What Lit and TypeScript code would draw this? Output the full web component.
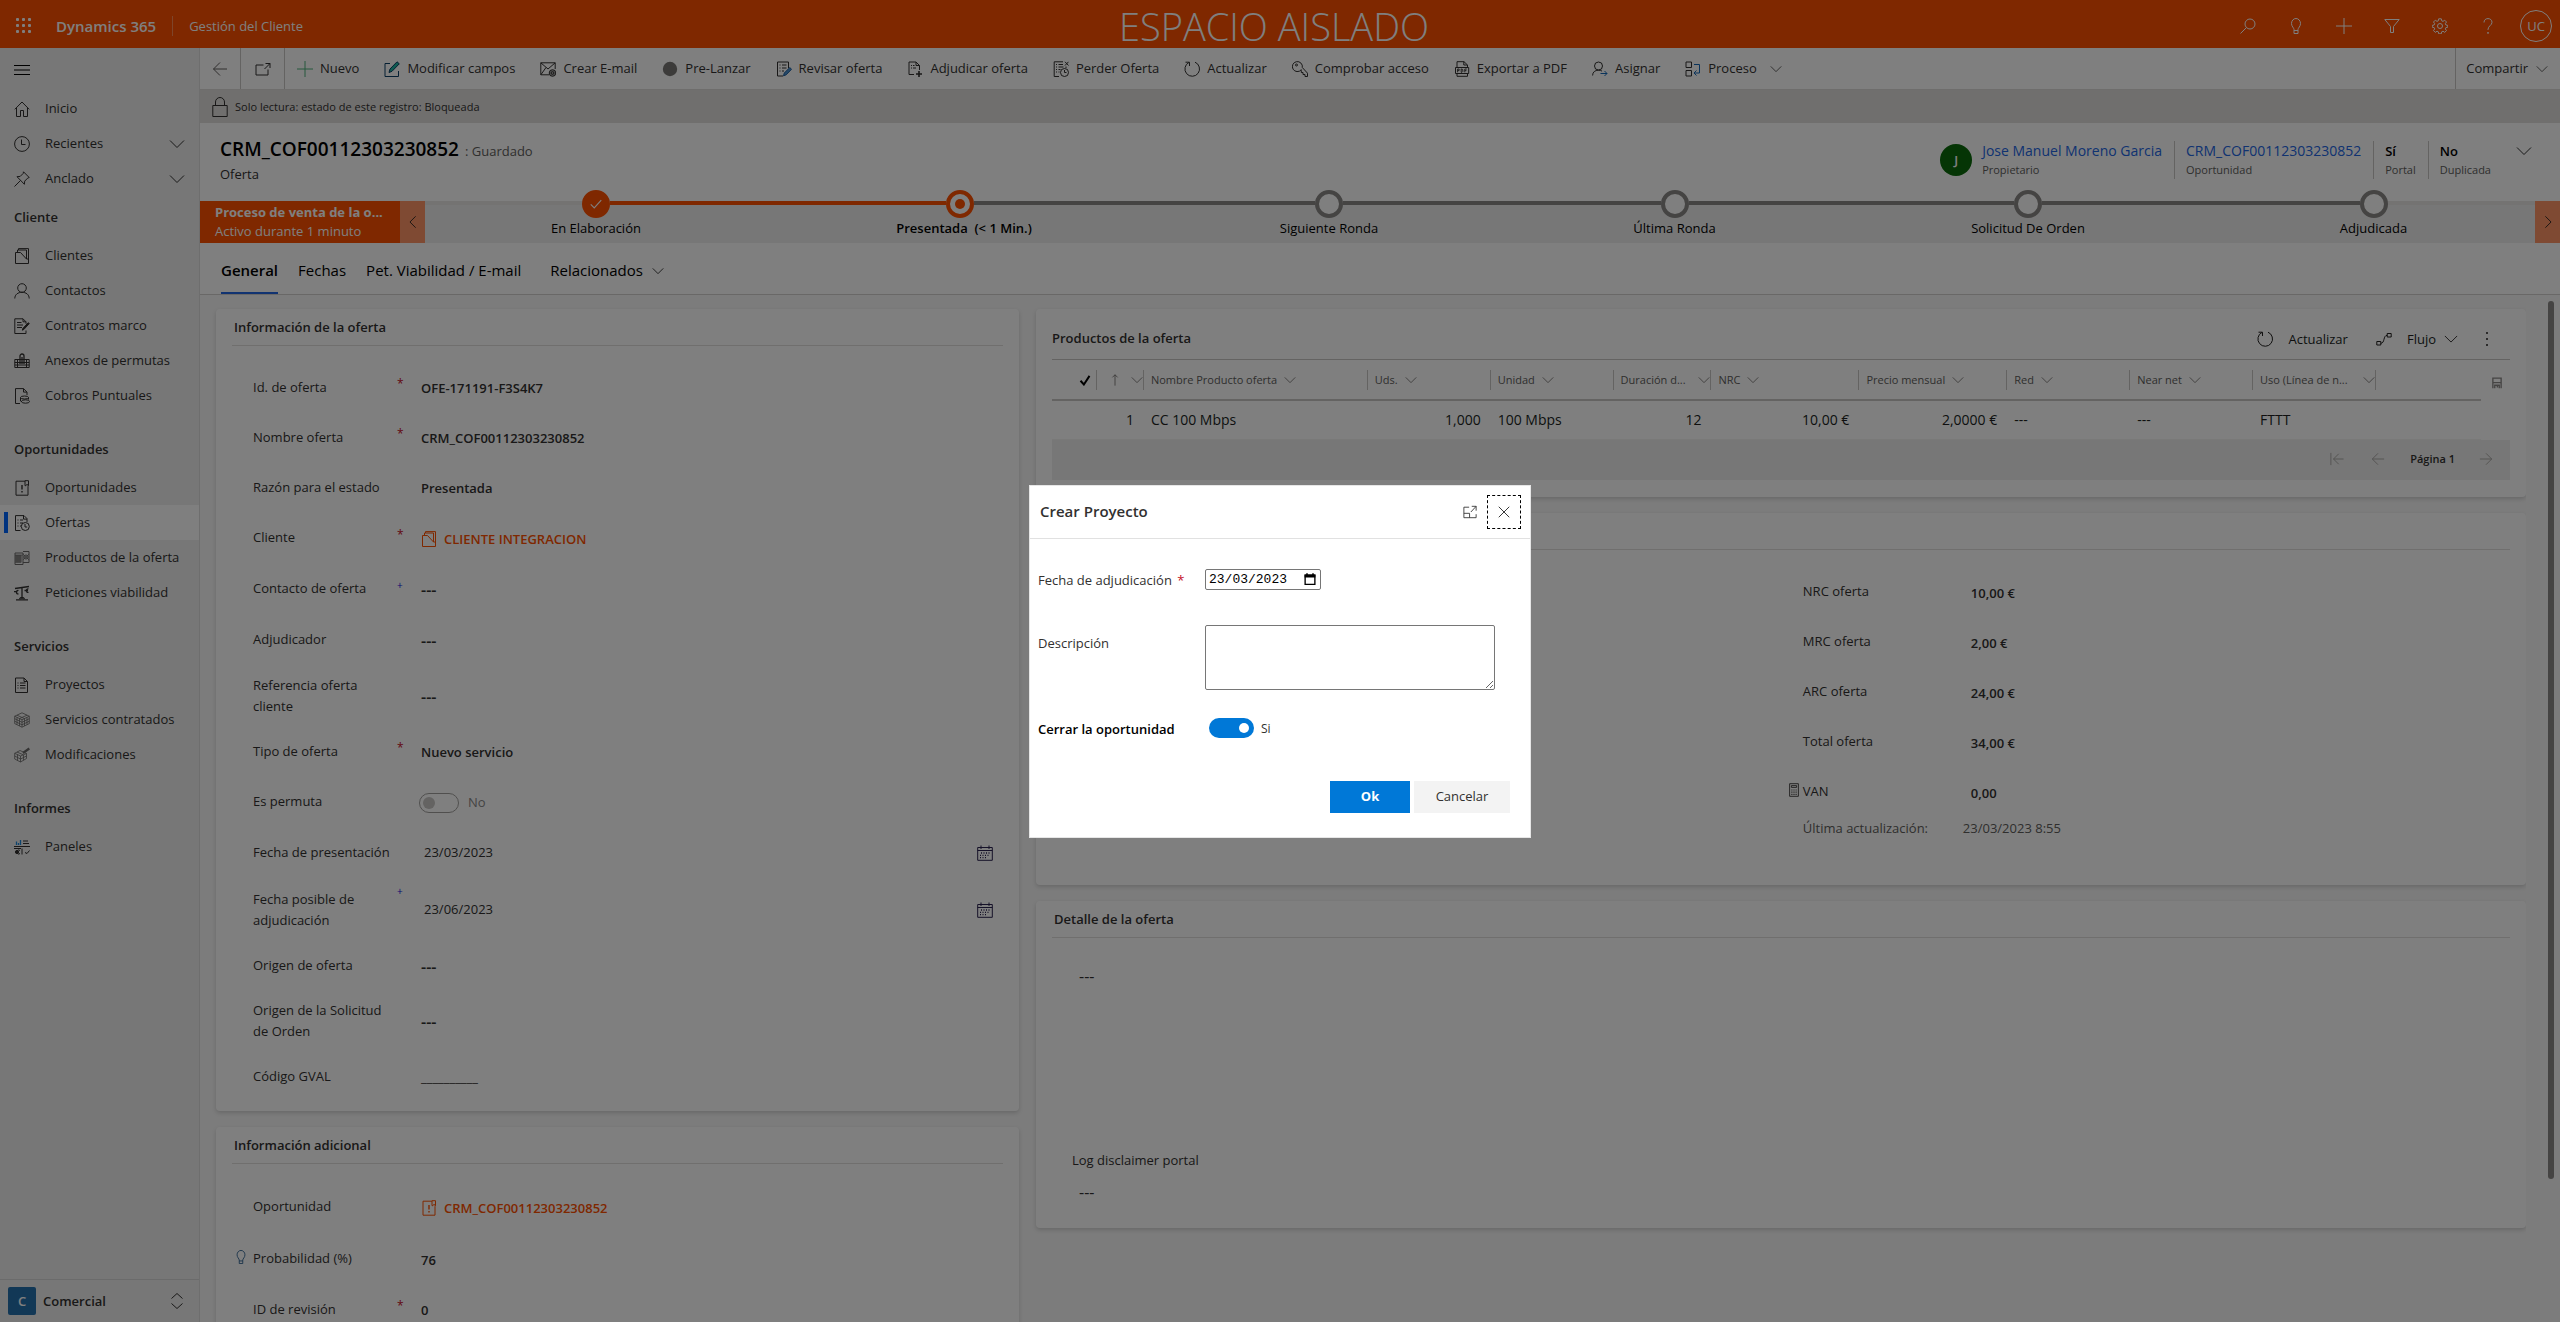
import { LitElement, html, svg, css, nothing, TemplateResult } from "lit";
import { customElement, state } from "lit/decorators.js";

/* 16x16 stroke icons, drawn in currentColor unless a colour is part of the glyph. */
const GLYPHS: Record<string, TemplateResult> = {
  waffle: svg`<g fill="currentColor" stroke="none">${[1, 7, 13].map((y) =>
    [1, 7, 13].map((x) => svg`<rect x=${x - 1} y=${y - 1} width="3" height="3" rx="1"/>`)
  )}</g>`,
  search: svg`<circle cx="10" cy="6" r="5"/><path d="M6.500 9.500.5 15.500"/>`,
  bulb: svg`<path d="M6 15.500h4v-4c0-1.500 2.500-3 2.500-6a4.500 5 0 0 0-9 0c0 3 2.500 4.500 2.500 6zM6 12.500h4"/>`,
  plus: svg`<path d="M8 0v16M0 8h16"/>`,
  filter: svg`<path d="M.8 1.500h14.400L9.500 8.500v6h-3v-6z"/>`,
  gear: svg`<circle cx="8" cy="8" r="2.500"/><path d="M6.700.8h2.600l.4 2 1.300.6 1.700-1.200 1.800 1.800-1.200 1.700.6 1.300 1.900.4v1.800l-1.900.4-.6 1.300 1.200 1.700-1.800 1.800-1.700-1.200-1.300.6-.4 2H6.700l-.4-2-1.300-.6-1.700 1.200-1.800-1.800 1.200-1.700-.6-1.300-1.900-.4V7.400l1.900-.4.6-1.300L1.500 4l1.800-1.800L5 3.400l1.300-.6z"/>`,
  help: svg`<path d="M4 4.500C4 2 5.700.6 8 .6s4 1.500 4 3.700c0 3-4 3.700-4 7.200v.5"/><path d="M8 14v1.800" stroke-width="1.400"/>`,
  menu: svg`<path d="M0 3.500h16M0 8h16M0 12.500h16" stroke-width="1.200"/>`,
  home: svg`<path d="M.8 8.300 8 1l7.200 7.300M2.500 7v8.500h4V9.500h3v6h4V7"/>`,
  clock: svg`<circle cx="8" cy="8" r="7.400"/><path d="M7.500 3.500v5h4"/>`,
  pin: svg`<path d="m9.500.8 5.700 5.700-1.500.6-3 3-.3 3.200L3 5.700l3.200-.3 3-3zM6.500 9.500.5 15.500"/>`,
  chev: svg`<path d="m1 4.500 7 7 7-7"/>`,
  left: svg`<path d="M11 1.500 4.500 8l6.500 6.500"/>`,
  right: svg`<path d="M5 1.500 11.500 8 5 14.500"/>`,
  updown: svg`<path d="m2.500 5.500 5.500-5 5.500 5M2.500 10.500l5.500 5 5.500-5"/>`,
  clientes: svg`<path d="M1.500 4.500h5l6 6.500h2v4.500h-13zM3.500 4.500v-2.500h9v9M4.500 2V.6h10V11"/>`,
  person: svg`<circle cx="8" cy="5" r="4.300"/><path d="M.8 15.500c0-4 3.200-6.200 7.200-6.200s7.200 2.200 7.200 6.200"/>`,
  contract: svg`<path d="M12 12.500v3H.8V.8H9l3 3v2M9 .8v3h3M3 4.500h4.500M3 7h6M3 9.500h5"/><path d="m15.300 5.500-5.500 6-1.500.7.500-1.700 5.300-5.700z" fill="currentColor"/>`,
  anexo: svg`<path d="M.8 14.500V6.500h14.400v8zM.8 9.500h14.400M.8 12h14.400M3.500 6.500v8M12.500 6.500v8"/><path d="M6 11V3a2 2 0 0 1 4 0v8M8 4v7" stroke-width="1.300"/>`,
  cobro: svg`<path d="M6 15.500H1.500V.6h8l3.500 3.500V7M9.500.6v3.500H13"/><ellipse cx="10.500" cy="9.500" rx="4" ry="1.500"/><ellipse cx="11.500" cy="13.500" rx="4" ry="1.700"/><path d="M6.500 9.500v3.500l1.500.8M14.500 9.500v2"/>`,
  oportunidad: svg`<path d="M11 1.200H2v14h12v-9M11 .7h3.500v5H14l-.9-1.500-1.200 1.500H11z"/><path d="M8 5v4.500M8 11v1.400" stroke-width="1.400"/>`,
  oferta: svg`<path d="M6.500 15.500H1.500V.6H10l3 3V7M9.500.6v3.500H13M3.500 5h1M3.500 8h1M3.500 11h1M6 5h3M6 8h3M6 11h1"/><circle cx="11.300" cy="11.500" r="4"/><path d="M11 9v3h2.200"/>`,
  productos: svg`<path d="M1 3h8v11.500H1zM9 1.500h6v11H9M3 5v7.500M5 5v7.500M7 5v7.500"/><path d="M2 5v8M4 5v8M6 5v8" stroke-width="1.200"/><circle cx="12" cy="7" r="2"/><path d="M1 5h8M9 4l6 6M15 4 9 10" opacity=".7"/>`,
  viabilidad: svg`<path d="M1 3.500 15 1.500M8 2v12M2 14.800h12M5.500 14c.5-1 1.500-1.500 2.500-1.500s2 .5 2.500 1.500M4.500 5.500C2 4.500 1.500 9.500 4.500 8.800M0 6.700h3.500M14.500 4C12 3 11.500 8 14.500 7.300M10.500 5.500h3.500" stroke-width="1.300"/>`,
  proyectos: svg`<path d="M1.500 1h8.500l3.500 3.500v11h-12zM10 1v3.500h3.500M3.500 6h1M3.500 8.500h1M3.500 11h1M6 6h5.500M6 8.500h5.500M6 11h5.500"/>`,
  cubo: svg`<path d="m8 .8 7.300 3.400v7.400L8 15.200.7 11.600V4.200zM.7 4.200 8 7.800l7.300-3.600M8 7.800v7.400M3 5.300v7.400M5.500 6.500v7.500M10.500 6.500v7.500M13 5.300v7.400M.7 6.700 8 10.300l7.300-3.600M.7 9.200 8 12.800l7.300-3.600M3 3.200 10.500 6.600M13 3.200 5.500 6.600" stroke-width=".8"/>`,
  modif: svg`<path d="m6 3.500 6.500 3v5L6.500 15 .7 12V6.300zM.7 6.300 6.500 9l6-2.500M6.500 9v6M3.500 7.500v6M.7 9l5.800 3 6-3M9.500 8v5.300M3 5l6 2.700" stroke-width=".8"/><path d="m9 6 6.300-4.500" stroke-width="2.200"/>`,
  paneles: svg`<path d="M0 7.500h16M0 9.500h7M8 9.500v6"/><path d="M2.500 6V2.500M4.500 6V4M6.500 6V1" stroke="#1a86d9" stroke-width="1.300"/><path d="M9 2h5M9 4.500h6M11 13.500l2 1 2.500-3M6 11.500a2 2 0 1 0 0 3"/><circle cx="3" cy="13" r="1.600" fill="currentColor"/>`,
  back: svg`<path d="M15 8H1.500M8 1.500 1.500 8 8 14.500"/>`,
  fwd: svg`<path d="M1 8h13.500M8 1.500 14.500 8 8 14.500"/>`,
  first: svg`<path d="M1 1v14M15.500 8H4M10 2 4 8l6 6"/>`,
  popout: svg`<path d="M8.500 4H1v10h12V8.500M10.500 2.500H15V7M15 2.500 9.500 8"/>`,
  lock: svg`<path d="M.8 8.500h14.400v11H.8zM3.500 8.500V5a4.500 4.500 0 0 1 9 0v3.500"/>`,
  campos: svg`<path d="M6 2.500H1v13h13.500V10" stroke="#0b3f66"/><path d="M5 11.500 6 8 13 .8l2.300 2L8 10.300z" fill="#1fb5a0" stroke="#0b3f66"/>`,
  mail: svg`<path d="M15.200 8V1.800H.8v12H9M.8 1.800 8 8l7.200-6.200M.8 13.800 6 6.500"/><circle cx="12.500" cy="12" r="3.300" fill="#aaa"/><circle cx="12.500" cy="12" r="1.400"/>`,
  dot: svg`<circle cx="8" cy="8" r="7.200" fill="#797775" stroke="none"/>`,
  revisar: svg`<path d="M7 15H1.500V1h11v6M3.500 4h1M3.500 7h1M3.500 10h1M6 4h4.500M6 7h4.500M6 10h2"/><path d="m7.500 14.800.8-2.800 5.500-5.500 1.700 1.800-5.300 5.500z" fill="#4a90d0" stroke="#1f5f9f"/>`,
  adjudicar: svg`<path d="M7 13.500H2V1h7l3.500 3.500V9M9 1v3.500h3.500M4 4.500h1M4 7h1M6 4.500h1.500M6 7h3"/><path d="M12 10v6M9 13h6" stroke-width="1.600"/>`,
  perder: svg`<path d="M6 15.500H1.200V.8H10M13 5.500V7M3 3.500h1M3 6h1M3 8.500h1M3 11h1M5.500 3.500H10M5.500 6h5M5.500 8.500h2M5.500 11h1M12 .8l3.500 3.700M15.500.8 12 4.500"/><circle cx="11.500" cy="11.500" r="4"/><path d="M11.500 9v2.500H13.500"/>`,
  refresh: svg`<path d="M11 1.200A7.300 7.300 0 1 1 5 1.400M5.500 5V1.200H1.500"/>`,
  key: svg`<path d="M9.300 8.700A5 5 0 1 1 10.300 6.500l5.200 5.700v3.300h-2.500v-2h-2v-2H9.300v-2z"/><circle cx="4.500" cy="4" r="1"/>`,
  pdf: svg`<path d="M3 6.500V.7h7L13.500 4v2.500M9.800.7V4h3.700M1.500 6.500h13.200v6H1.500zM3 12.500v2.800h10.500v-2.800"/><path d="M3.600 11.300V8h1.500v1.600H3.600M7.200 8v3.300h.8l.8-.8V8.700L8 8zM10.800 11.300V8h2M10.800 9.600h1.600" stroke-width=".9"/>`,
  asignar: svg`<circle cx="6.500" cy="5" r="4"/><path d="M.6 14.500c0-3.500 2.500-5.300 5.900-5.300 1.500 0 2.500.3 3.500.9"/><path d="M8.500 12.500H15M12.500 10l2.500 2.500-2.500 2.500" stroke="#1568b8"/>`,
  proceso: svg`<path d="M1 1h5.500v5.500H1zM1 9.500h5.500V15H1z"/><path d="M9 3.500h5.500v8.500H9M11.500 9.500 9 12l2.500 2.500" stroke="#1568b8"/>`,
  flujo: svg`<path d="M.8 10.500h4v3.500h-4zM11.200 2.500h4v3.500h-4zM4.800 12.300C9 12.300 7 4.300 11.200 4.300"/>`,
  dots: svg`<g fill="currentColor" stroke="none"><circle cx="8" cy="2" r="1"/><circle cx="8" cy="8" r="1"/><circle cx="8" cy="14" r="1"/></g>`,
  calendar: svg`<path d="M.7 2.500h14.600v12.800H.7zM.7 5.500h14.600M4 .5v3.500M12 .5v3.500"/><path d="M4 8h9M3 10.300h10M3 12.600h7" stroke-dasharray="1 1.500" stroke-width="1.300"/>`,
  calc: svg`<path d="M3 .8h10v14.400H3zM5 3h6v2H5z"/><path d="M5 8h6M5 10.500h6M5 13h6" stroke-dasharray="1.200 1.200" stroke-width="1.300"/>`,
  save: svg`<path d="M2.500 15V1.500h11V15M3 7.500h10M5 15v-4h6v4M8.500 12v2" stroke-width="1.800"/>`,
  up: svg`<path d="M8 15.500V1M4.500 4.500 8 1l3.500 3.500"/>`,
  checkbold: svg`<path d="m2 9 4.500 5L14 2.500" stroke-width="2.600"/>`,
  check: svg`<path d="m2 8.500 4 4 8-9" stroke-width="1.300"/>`,
  expand: svg`<path d="M7 2.500H1v12h14v-4M1 9.500h6.500v5M10 1.500h5v5M15 1.500 9 8"/>`,
  close: svg`<path d="m1 1 14 14M15 1 1 15" stroke-width="1.300"/>`,
  datepick: svg`<path d="M1.500 3h13v12.300h-13z" stroke-width="1.800"/><path d="M.8 2h14.400v4H.8zM3 .2h2v2H3zM11 .2h2v2h-2z" fill="currentColor" stroke="none"/>`,
};

const icon = (name: string, cls = "i16") => html`<svg
  class="ic ${cls}"
  viewBox=${name === "lock" ? "0 0 16 20" : "0 0 16 16"}
  aria-hidden="true"
>
  ${GLYPHS[name]}
</svg>`;

interface NavGroup {
  title?: string;
  items: { label: string; icon: string; chev?: boolean; active?: boolean; dim?: boolean }[];
}

const NAV: NavGroup[] = [
  {
    items: [
      { label: "Inicio", icon: "home" },
      { label: "Recientes", icon: "clock", chev: true },
      { label: "Anclado", icon: "pin", chev: true },
    ],
  },
  {
    title: "Cliente",
    items: [
      { label: "Clientes", icon: "clientes" },
      { label: "Contactos", icon: "person" },
      { label: "Contratos marco", icon: "contract" },
      { label: "Anexos de permutas", icon: "anexo" },
      { label: "Cobros Puntuales", icon: "cobro" },
    ],
  },
  {
    title: "Oportunidades",
    items: [
      { label: "Oportunidades", icon: "oportunidad" },
      { label: "Ofertas", icon: "oferta", active: true },
      { label: "Productos de la oferta", icon: "productos", dim: true },
      { label: "Peticiones viabilidad", icon: "viabilidad" },
    ],
  },
  {
    title: "Servicios",
    items: [
      { label: "Proyectos", icon: "proyectos" },
      { label: "Servicios contratados", icon: "cubo", dim: true },
      { label: "Modificaciones", icon: "modif", dim: true },
    ],
  },
  { title: "Informes", items: [{ label: "Paneles", icon: "paneles" }] },
];

const COMMANDS: [string, string][] = [
  ["plus", "Nuevo"],
  ["campos", "Modificar campos"],
  ["mail", "Crear E-mail"],
  ["dot", "Pre-Lanzar"],
  ["revisar", "Revisar oferta"],
  ["adjudicar", "Adjudicar oferta"],
  ["perder", "Perder Oferta"],
  ["refresh", "Actualizar"],
  ["key", "Comprobar acceso"],
  ["pdf", "Exportar a PDF"],
  ["asignar", "Asignar"],
  ["proceso", "Proceso"],
];

const STAGES = ["En Elaboración", "Presentada  (< 1 Min.)", "Siguiente Ronda", "Última Ronda", "Solicitud De Orden", "Adjudicada"];

interface Field {
  id: string;
  label: string;
  value?: string;
  mark?: "req" | "rec";
  kind?: "empty" | "lookup" | "date" | "toggle" | "mask";
  icon?: string;
  lead?: string;
  size?: string;
}

const OFFER: Field[] = [
  { id: "id", label: "Id. de oferta", value: "OFE-171191-F3S4K7", mark: "req" },
  { id: "nombre", label: "Nombre oferta", value: "CRM_COF00112303230852", mark: "req" },
  { id: "razon", label: "Razón para el estado", value: "Presentada" },
  { id: "cliente", label: "Cliente", value: "CLIENTE INTEGRACION", mark: "req", kind: "lookup", icon: "clientes", size: "md" },
  { id: "contacto", label: "Contacto de oferta", mark: "rec", kind: "empty", size: "md" },
  { id: "adjudicador", label: "Adjudicador", kind: "empty", size: "md" },
  { id: "ref", label: "Referencia oferta cliente", kind: "empty", size: "lg" },
  { id: "tipo", label: "Tipo de oferta", value: "Nuevo servicio", mark: "req" },
  { id: "permuta", label: "Es permuta", value: "No", kind: "toggle" },
  { id: "fpres", label: "Fecha de presentación", value: "23/03/2023", kind: "date", size: "date" },
  { id: "fadj", label: "Fecha posible de adjudicación", value: "23/06/2023", mark: "rec", kind: "date", size: "lg" },
  { id: "origen", label: "Origen de oferta", kind: "empty" },
  { id: "osol", label: "Origen de la Solicitud de Orden", kind: "empty", size: "lg" },
  { id: "gval", label: "Código GVAL", value: "__________", kind: "mask" },
];

const EXTRA: Field[] = [
  { id: "opp", label: "Oportunidad", value: "CRM_COF00112303230852", kind: "lookup", icon: "oportunidad", size: "date" },
  { id: "prob", label: "Probabilidad (%)", value: "76", lead: "bulb", size: "md" },
  { id: "rev", label: "ID de revisión", value: "0", mark: "req" },
];

const TOTALS: Field[] = [
  { id: "nrc", label: "NRC oferta", value: "10,00 €" },
  { id: "mrc", label: "MRC oferta", value: "2,00 €" },
  { id: "arc", label: "ARC oferta", value: "24,00 €" },
  { id: "total", label: "Total oferta", value: "34,00 €" },
  { id: "van", label: "VAN", value: "0,00", lead: "calc" },
];

@customElement("app-root")
export class AppRoot extends LitElement {
  @state() private closeOpportunity = true;

  static styles = css`
    :host {
      display: block;
      font-family: "Open Sans", "Noto Sans", sans-serif;
      font-size: 13px;
      line-height: 21px;
      color: #323130;
    }
    * { box-sizing: border-box; }
    button, input, textarea { font: inherit; color: inherit; }
    button { background: none; border: 0; padding: 0; }
    a { color: inherit; text-decoration: none; }
    h1, h2, h3, p { margin: 0; font-size: inherit; font-weight: 600; }
    .ic { flex: none; fill: none; stroke: currentColor; display: block; }
    .i12 { width: 12px; height: 12px; }
    .i14 { width: 14px; height: 14px; }
    .i16 { width: 16px; height: 16px; }
    .ilock { width: 16px; height: 20px; }

    .app { height: 100vh; display: grid; grid-template-rows: 48px minmax(0, 1fr); background: #fff; }
    .top { display: grid; grid-template-columns: 1fr auto 1fr; align-items: center; background: #ff5000; color: #fff; }
    .brand { display: flex; align-items: center; }
    .waffle { width: 48px; height: 48px; display: grid; place-items: center; margin-right: 8px; }
    .product { font-size: 15px; font-weight: 600; padding-right: 16px; border-right: 1px solid #ff8a55; line-height: 20px; }
    .appname { padding-left: 16px; }
    .env { font-size: 38px; font-weight: 300; line-height: 52px; height: 52px; align-self: start; margin-right: 12px; }
    .tools { display: flex; justify-content: flex-end; }
    .tools button { width: 48px; height: 48px; display: grid; place-items: center; }
    .uc { width: 32px; height: 32px; border: 1px solid #fff; border-radius: 50%; display: grid; place-items: center; }

    .body { display: grid; grid-template-columns: 200px minmax(0, 1fr); min-height: 0; }
    .side { background: #efefef; border-right: 1px solid #dcdcdc; display: flex; flex-direction: column; min-height: 0; }
    .burger { height: 43px; padding-left: 14px; text-align: left; color: #000; }
    .group + .group { margin-top: 15px; }
    .group.first + .group { margin-top: 0; }
    .group h2 { line-height: 42px; padding-left: 14px; }
    .nav { height: 35px; display: flex; align-items: center; gap: 15px; padding: 0 14px; position: relative; }
    .nav .grow { flex: 1; white-space: nowrap; }
    .nav.dim .ic { opacity: 0.7; }
    .nav.active { background: #fff; }
    .nav.active::before { content: ""; position: absolute; left: 4px; top: 7px; width: 4px; height: 21px; background: #0066ff; }
    .area { margin-top: auto; height: 43px; border-top: 1px solid #d6d6d6; display: flex; align-items: center; gap: 7px; padding: 0 14px 0 8px; text-align: left; font-weight: 600; }
    .area .sq { width: 28px; height: 28px; border-radius: 2px; background: #2470ad; color: #fff; display: grid; place-items: center; }
    .area .grow { flex: 1; }

    .main { display: flex; flex-direction: column; min-width: 0; min-height: 0; }
    .cmd { height: 42px; flex: none; display: flex; align-items: stretch; border-bottom: 1px solid #dddbd9; }
    .cmd .sq { width: 41px; display: grid; place-items: center; border-right: 1px solid #c8c6c4; color: #605e5c; }
    .cmd .sq.wide { width: 44px; color: #323130; }
    .cmds { display: flex; align-items: center; gap: 25px; padding-left: 12px; flex: 1; }
    .cmds button { display: flex; align-items: center; gap: 7px; white-space: nowrap; }
    .cmds .more { margin-left: 6px; }
    .plusgreen { color: #4cb07a; }
    .share { display: flex; align-items: center; gap: 8px; padding: 0 12px 0 10px; border-left: 1px solid #c8c6c4; }

    .ro { height: 33px; flex: none; display: flex; align-items: center; gap: 7px; padding-left: 12px; background: #e1dfdd; font-size: 11px; }
    .head { height: 78px; flex: none; display: flex; justify-content: space-between; padding: 14px 13px 0 20px; }
    .head h1 { font-size: 19px; line-height: 24px; color: #000; display: flex; align-items: baseline; gap: 6px; }
    .head h1 small { font-size: 13px; font-weight: 400; color: #605e5c; }
    .head .kind { color: #323130; font-weight: 400; line-height: 20px; margin-top: 1px; }
    .facts { display: flex; align-items: flex-start; padding-top: 4px; }
    .fact { height: 38px; padding: 0 12px 0 11px; border-left: 1px solid #c8c6c4; line-height: 20px; color: #000; }
    .fact.owner { border: 0; padding-left: 0; display: flex; gap: 10px; align-items: center; }
    .fact b { font-size: 14px; font-weight: 400; display: block; }
    .fact b.strong { font-size: 13px; font-weight: 600; }
    .fact small { display: block; font-size: 11px; line-height: 18px; color: #605e5c; }
    .link { color: #2266e3; }
    .avatar { width: 32px; height: 32px; border-radius: 50%; background: #0b6a0b; color: #fff; display: grid; place-items: center; font-weight: 600; }
    .facts > button { padding: 2px 15px 0 13px; }

    .bpf { height: 42px; flex: none; display: flex; background: #efefef; }
    .bpf .name { width: 200px; padding: 2px 12px 0 15px; background: #ff5000; color: #fff; line-height: 19px; font-size: 13px; }
    .bpf .name strong { display: block; font-weight: 700; white-space: nowrap; }
    .bpf .arrow { width: 25px; display: grid; place-items: center; background: #ff9466; color: #201f1e; }
    .stages { flex: 1; display: grid; grid-template-columns: 342fr 386fr 352fr 339fr 368fr 323fr; margin: 0; padding: 0; list-style: none; }
    .stage { display: grid; grid-template-columns: 1fr 28px 1fr; grid-template-rows: 14px 1fr; color: #000; }
    .stage i { height: 4px; background: #8a8886; grid-row: 1; }
    .stage .pre { grid-column: 1; }
    .stage .post { grid-column: 3; }
    .stage .none { background: #e8e6e4; }
    .stage .done { background: #ff5000; }
    .ring { grid-row: 1; grid-column: 2; width: 28px; height: 28px; margin-top: -11px; border: 4px solid #8a8886; border-radius: 50%; background: #fff; display: grid; place-items: center; }
    .ring.now { border-color: #ff5000; }
    .ring.now::after { content: ""; width: 10px; height: 10px; border-radius: 50%; background: #ff5000; }
    .ring.ok { background: #ff5000; border-color: #ff5000; color: #fff; }
    .stage span { grid-column: 1 / 4; grid-row: 2; text-align: center; line-height: 26px; white-space: pre; }
    .stage .cur { font-weight: 600; padding-left: 8px; }

    .tabs { height: 52px; flex: none; display: flex; gap: 20px; padding-left: 21px; border-bottom: 1px solid #d2d0ce; font-size: 15px; color: #000; }
    .tabs button { height: 51px; padding-top: 6px; display: flex; align-items: center; gap: 9px; border-bottom: 2px solid transparent; white-space: nowrap; }
    .tabs .on { font-weight: 600; border-color: #2266e3; }
    .tabs .menu { margin-left: 9px; }

    .view { flex: 1; min-height: 0; display: grid; grid-template-columns: minmax(0, 1fr) 34px; background: #f8f8f8; }
    .cols { overflow: hidden; padding: 14px 0 0 16px; display: grid; grid-template-columns: 803fr 1490fr; column-gap: 17px; align-items: start; }
    .col { display: grid; gap: 16px; min-width: 0; }
    .rail { padding: 6px 6px 0 22px; }
    .rail div { width: 6px; height: 86%; border-radius: 3px; background: #8a8886; }
    .card { background: #fff; border-radius: 4px; box-shadow: 0 2px 4px rgba(0, 0, 0, 0.16); padding: 0 16px; min-width: 0; }
    .cardhead { line-height: 36px; height: 37px; border-bottom: 1px solid #e1dfdd; padding-left: 2px; }
    .form { padding: 16px 0 10px; }

    .row { display: grid; grid-template-columns: 21px 142px 26px minmax(0, 1fr); align-items: center; height: 50px; }
    .row.md { height: 51px; }
    .row.date { height: 53px; }
    .row.lg { height: 61px; }
    .row .mark { font-size: 12px; line-height: 12px; height: 18px; padding-left: 2px; }
    .row .mark.rec { font-size: 10px; height: 20px; }
    .row.lg .mark { align-self: start; padding-top: 6px; }
    .req { color: #c50f1f; }
    .rec { color: #1010e0; }
    .row .val { display: flex; align-items: center; gap: 7px; font-weight: 600; padding-top: 3px; }
    .row .val.empty { font-size: 16px; padding-top: 4px; }
    .row .val.plain { font-weight: 400; color: #323130; }
    .row .val.orange { color: #ff5000; }
    .row .val.datev { padding: 0 10px 0 3px; font-weight: 400; }
    .datev input { flex: 1; min-width: 0; border: 0; padding: 0; background: none; outline: 0; }
    .datev button { color: #2b2250; }
    .row .lead { color: #2b5f8f; padding: 0 0 4px 2px; }
    .sw { appearance: none; margin: 0; border-radius: 12px; display: flex; align-items: center; }
    .sw::after { content: ""; border-radius: 50%; }
    .sw.off { width: 40px; height: 20px; border: 1px solid #a19f9d; padding: 0 3px; margin-left: -2px; }
    .sw.off::after { width: 12px; height: 12px; background: #c8c6c4; }
    .val .mute { color: #8a8886; font-weight: 400; padding-left: 2px; }

    .right .row { grid-template-columns: 16px 168px minmax(0, 1fr); }
    .right .row .lead { color: #323130; padding: 0 0 4px; }
    .totals { padding: 17px 0 46px; margin-left: 50.4%; }
    .upd { display: grid; grid-template-columns: 16px 160px 1fr; line-height: 22px; color: #605e5c; }
    .detail { display: flex; flex-direction: column; padding: 28px 20px 25px; }
    .detail .dash { padding-left: 7px; font-size: 16px; }
    .detail .log { margin-top: 163px; margin-bottom: 11px; }

    .phead { height: 51px; display: flex; align-items: flex-end; justify-content: space-between; padding-bottom: 10px; border-bottom: 1px solid #c8c6c4; }
    .ptools { display: flex; align-items: center; color: #201f1e; line-height: 20px; padding-right: 15px; }
    .ptools button { display: flex; align-items: center; gap: 15px; }
    .ptools button + button { margin-left: 28px; }
    .ptools .menu span { display: flex; align-items: center; gap: 8px; }
    .ptools button.dots { margin-left: 21px; }
    .gridrow { display: grid; grid-template-columns: minmax(0, 1fr) 29px; }
    table { width: 100%; border-collapse: collapse; table-layout: fixed; }
    th { height: 40px; padding: 0; font-weight: 400; font-size: 11px; text-align: left; color: #605e5c; border-bottom: 2px solid #c8c6c4; }
    th div { height: 20px; line-height: 20px; display: flex; align-items: center; gap: 7px; padding: 0 0 0 7px; border-right: 1px solid #c8c6c4; white-space: nowrap; }
    th .grow { flex: 1; }
    th.sel div { justify-content: flex-end; padding-right: 5px; color: #000; }
    th.sort div { justify-content: space-between; padding-left: 12px; }
    th:last-child div { border: 0; }
    td { height: 39px; padding: 0 7px; font-size: 14px; white-space: nowrap; border-bottom: 1px solid #f3f2f1; color: #201f1e; }
    td.num { text-align: right; padding-right: 10px; }
    .save { padding: 17px 0 0 10px; color: #8a8886; }
    .pager { height: 40px; background: #efefef; display: flex; align-items: center; justify-content: flex-end; padding: 0 17px 2px 0; color: #a19f9d; font-size: 11px; }
    .pager span { color: #323130; font-weight: 600; padding: 0 24px 0 25px; }
    .pager button + button { margin-left: 27px; }
    .products { padding-bottom: 17px; }

    .veil { position: fixed; inset: 0; background: rgba(0, 0, 0, 0.5); display: grid; place-items: center; }
    .dlg { width: 502px; background: #fff; border: 1px solid #e6e6e6; }
    .dhead { height: 53px; display: flex; align-items: center; padding: 0 9px 0 10px; border-bottom: 1px solid #e1e1e1; }
    .dhead h2 { flex: 1; font-size: 15px; }
    .dhead button { width: 34px; height: 34px; display: grid; place-items: center; color: #333; }
    .dhead .x { border: 1px dashed #000; }
    .dform { display: grid; grid-template-columns: 168px 1fr; padding: 30px 35px 0 7px; align-items: start; }
    .dform label { padding-left: 1px; line-height: 22px; }
    .dform label .req { padding-left: 2px; }
    .dbox { width: 116px; height: 21px; display: flex; align-items: center; padding: 0 4px 0 3px; border: 1px solid #767676; border-radius: 2px; }
    .dbox input { width: 95px; border: 0; padding: 0; outline: 0; font-family: "Liberation Mono", monospace; font-size: 13px; line-height: 19px; color: #000; }
    .dbox button { color: #000; }
    textarea { display: block; width: 100%; height: 65px; padding: 2px; border: 1px solid #767676; border-radius: 2px; background: #fff; margin-top: 34px; }
    .dform .second { margin-top: 41px; }
    .dform .third { margin-top: 28px; font-weight: 600; color: #000; }
    .swline { display: flex; align-items: center; gap: 7px; margin: 28px 0 0 4px; font-size: 12px; }
    .sw.on { width: 45px; height: 20px; background: #0078d7; padding: 0 5px; justify-content: flex-end; }
    .sw.on::after { width: 10px; height: 10px; background: #fff; }
    .sw.closed { width: 45px; height: 20px; border: 1px solid #767676; padding: 0 5px; }
    .sw.closed::after { width: 10px; height: 10px; background: #333; }
    .dbtns { display: flex; justify-content: flex-end; gap: 4px; padding: 41px 20px 24px; }
    .dbtns button { width: 96px; height: 32px; background: #f3f3f3; }
    .dbtns .ok { width: 80px; background: #0078d7; color: #fff; font-weight: 700; }
  `;

  private field(f: Field) {
    const value = () => {
      switch (f.kind) {
        case "lookup":
          return html`<div class="val orange">${icon(f.icon!)}<a href="#">${f.value}</a></div>`;
        case "date":
          return html`<div class="val datev">
            <input id=${f.id} type="text" readonly .value=${f.value!} /><button aria-label="Abrir calendario">${icon("calendar")}</button>
          </div>`;
        case "toggle":
          return html`<div class="val"><input class="sw off" id=${f.id} type="checkbox" role="switch" disabled /><span class="mute">${f.value}</span></div>`;
        case "empty":
          return html`<div class="val empty" id=${f.id}>---</div>`;
        case "mask":
          return html`<div class="val plain" id=${f.id}>${f.value}</div>`;
        default:
          return html`<div class="val" id=${f.id}>${f.value}</div>`;
      }
    };
    const tied = f.kind === "date" || f.kind === "toggle";
    return html`<div class="row ${f.size ?? ""}">
      <span class="lead">${f.lead ? icon(f.lead, "i14") : nothing}</span>
      ${tied ? html`<label for=${f.id}>${f.label}</label>` : html`<span>${f.label}</span>`}
      <span class="mark ${f.mark ?? ""}">${f.mark === "req" ? "*" : f.mark === "rec" ? "+" : nothing}</span>
      ${value()}
    </div>`;
  }

  private total(f: Field) {
    return html`<div class="row">
      <span class="lead">${f.lead ? icon(f.lead, "i14") : nothing}</span>
      <span>${f.label}</span>
      <div class="val">${f.value}</div>
    </div>`;
  }

  private header() {
    return html`<header class="top">
      <div class="brand">
        <button class="waffle" aria-label="Aplicaciones">${icon("waffle")}</button>
        <span class="product">Dynamics 365</span><span class="appname">Gestión del Cliente</span>
      </div>
      <div class="env">ESPACIO AISLADO</div>
      <div class="tools">
        ${["search", "bulb", "plus", "filter", "gear", "help"].map((n) => html`<button aria-label=${n}>${icon(n)}</button>`)}
        <button aria-label="Cuenta"><span class="uc">UC</span></button>
      </div>
    </header>`;
  }

  private sidebar() {
    return html`<nav class="side">
      <button class="burger" aria-label="Menú">${icon("menu")}</button>
      ${NAV.map(
        (g) => html`<div class="group ${g.title ? "" : "first"}">
          ${g.title ? html`<h2>${g.title}</h2>` : nothing}
          ${g.items.map(
            (i) => html`<a href="#" class="nav ${i.active ? "active" : ""} ${i.dim ? "dim" : ""}"
              >${icon(i.icon)}<span class="grow">${i.label}</span>${i.chev ? icon("chev") : nothing}</a
            >`
          )}
        </div>`
      )}
      <button class="area"><span class="sq">C</span><span class="grow">Comercial</span>${icon("updown")}</button>
    </nav>`;
  }

  private stage(name: string, i: number) {
    const pre = i === 0 ? "none" : i === 1 ? "done" : "";
    const post = i === 0 ? "done" : i === STAGES.length - 1 ? "none" : "";
    return html`<li class="stage">
      <i class="pre ${pre}"></i>
      <div class="ring ${i === 0 ? "ok" : i === 1 ? "now" : ""}">${i === 0 ? icon("check", "i14") : nothing}</div>
      <i class="post ${post}"></i>
      <span class=${i === 1 ? "cur" : ""}>${name}</span>
    </li>`;
  }

  private products() {
    const heads: [string, boolean?][] = [
      ["Nombre Producto oferta"], ["Uds."], ["Unidad"], ["Duración d...", true], ["NRC"],
      ["Precio mensual"], ["Red"], ["Near net"], ["Uso (Línea de n...", true],
    ];
    return html`<section class="card products">
      <div class="phead">
        <h2>Productos de la oferta</h2>
        <div class="ptools">
          <button>${icon("refresh")}Actualizar</button>
          <button class="menu">${icon("flujo")}<span>Flujo ${icon("chev", "i14")}</span></button>
          <button class="dots" aria-label="Más">${icon("dots")}</button>
        </div>
      </div>
      <div class="gridrow">
        <table>
          <colgroup>
            ${[45, 47, 224, 123, 123, 98, 148, 148, 123, 123, 123, 105].map((w) => html`<col style="width:${(w / 1430) * 100}%" />`)}
          </colgroup>
          <thead>
            <tr>
              <th class="sel"><div>${icon("checkbold", "i12")}</div></th>
              <th class="sort"><div>${icon("up", "i12")}${icon("chev", "i12")}</div></th>
              ${heads.map(([h, far]) => html`<th><div><span class=${far ? "grow" : ""}>${h}</span>${icon("chev", "i12")}</div></th>`)}
              <th><div></div></th>
            </tr>
          </thead>
          <tbody>
            <tr>
              <td></td><td class="num">1</td><td>CC 100 Mbps</td><td class="num">1,000</td><td>100 Mbps</td><td class="num">12</td>
              <td class="num">10,00 €</td><td class="num">2,0000 €</td><td>---</td><td>---</td><td>FTTT</td><td></td>
            </tr>
          </tbody>
        </table>
        <div class="save">${icon("save", "i12")}</div>
      </div>
      <div class="pager">
        <button aria-label="Primera página">${icon("first", "i14")}</button>
        <button aria-label="Anterior">${icon("back", "i14")}</button>
        <span>Página 1</span>
        <button aria-label="Siguiente">${icon("fwd", "i14")}</button>
      </div>
    </section>`;
  }

  private dialog() {
    return html`<div class="veil">
      <div class="dlg" role="dialog" aria-modal="true" aria-labelledby="dt">
        <div class="dhead">
          <h2 id="dt">Crear Proyecto</h2>
          <button aria-label="Expandir">${icon("expand", "i14")}</button>
          <button class="x" aria-label="Cerrar">${icon("close", "i12")}</button>
        </div>
        <div class="dform">
          <label for="fecha">Fecha de adjudicación <span class="req">*</span></label>
          <div class="dbox"><input id="fecha" type="text" value="23/03/2023" /><button aria-label="Elegir fecha">${icon("datepick", "i12")}</button></div>
          <label class="second" for="desc">Descripción</label>
          <textarea id="desc"></textarea>
          <label class="third" for="cerrar">Cerrar la oportunidad</label>
          <div class="swline">
            <input
              class="sw ${this.closeOpportunity ? "on" : "closed"}"
              id="cerrar"
              type="checkbox"
              role="switch"
              .checked=${this.closeOpportunity}
              @change=${(e: Event) => (this.closeOpportunity = (e.target as HTMLInputElement).checked)}
            />
            <span>${this.closeOpportunity ? "Si" : "No"}</span>
          </div>
        </div>
        <div class="dbtns"><button class="ok">Ok</button><button>Cancelar</button></div>
      </div>
    </div>`;
  }

  render() {
    return html`<div class="app">
        ${this.header()}
        <div class="body">
          ${this.sidebar()}
          <main class="main">
            <div class="cmd">
              <button class="sq" aria-label="Atrás">${icon("back")}</button>
              <button class="sq wide" aria-label="Abrir en ventana nueva">${icon("popout")}</button>
              <div class="cmds">
                ${COMMANDS.map(
                  ([i, t]) => html`<button>
                    ${i === "plus" ? html`<span class="plusgreen">${icon(i)}</span>` : icon(i)}<span>${t}</span>${t === "Proceso"
                      ? html`<span class="more">${icon("chev", "i12")}</span>`
                      : nothing}
                  </button>`
                )}
              </div>
              <button class="share"><span>Compartir</span>${icon("chev", "i12")}</button>
            </div>
            <div class="ro">${icon("lock", "ilock")}<span>Solo lectura: estado de este registro: Bloqueada</span></div>
            <div class="head">
              <div>
                <h1>CRM_COF00112303230852 <small>: Guardado</small></h1>
                <p class="kind">Oferta</p>
              </div>
              <div class="facts">
                <div class="fact owner">
                  <span class="avatar">J</span>
                  <div><b><a class="link" href="#">Jose Manuel Moreno Garcia</a></b><small>Propietario</small></div>
                </div>
                <div class="fact"><b><a class="link" href="#">CRM_COF00112303230852</a></b><small>Oportunidad</small></div>
                <div class="fact"><b class="strong">Sí</b><small>Portal</small></div>
                <div class="fact"><b class="strong">No</b><small>Duplicada</small></div>
                <button aria-label="Más datos">${icon("chev")}</button>
              </div>
            </div>
            <div class="bpf">
              <div class="name"><strong>Proceso de venta de la o...</strong>Activo durante 1 minuto</div>
              <button class="arrow" aria-label="Anterior">${icon("left", "i14")}</button>
              <ol class="stages">${STAGES.map((s, i) => this.stage(s, i))}</ol>
              <button class="arrow" aria-label="Siguiente">${icon("right", "i14")}</button>
            </div>
            <div class="tabs">
              <button class="on">General</button><button>Fechas</button><button>Pet. Viabilidad / E-mail</button
              ><button class="menu">Relacionados ${icon("chev", "i12")}</button>
            </div>
            <div class="view">
              <div class="cols">
                <div class="col">
                  <section class="card"><h2 class="cardhead">Información de la oferta</h2><div class="form">${OFFER.map((f) => this.field(f))}</div></section>
                  <section class="card"><h2 class="cardhead">Información adicional</h2><div class="form">${EXTRA.map((f) => this.field(f))}</div></section>
                </div>
                <div class="col right">
                  ${this.products()}
                  <section class="card">
                    <div class="cardhead"></div>
                    <div class="totals">
                      ${TOTALS.map((f) => this.total(f))}
                      <div class="upd"><span></span><span>Última actualización:</span><span>23/03/2023 8:55</span></div>
                    </div>
                  </section>
                  <section class="card">
                    <h2 class="cardhead">Detalle de la oferta</h2>
                    <div class="detail">
                      <span class="dash">---</span>
                      <span class="log">Log disclaimer portal</span>
                      <span class="dash">---</span>
                    </div>
                  </section>
                </div>
              </div>
              <div class="rail"><div></div></div>
            </div>
          </main>
        </div>
      </div>
      ${this.dialog()}`;
  }
}
